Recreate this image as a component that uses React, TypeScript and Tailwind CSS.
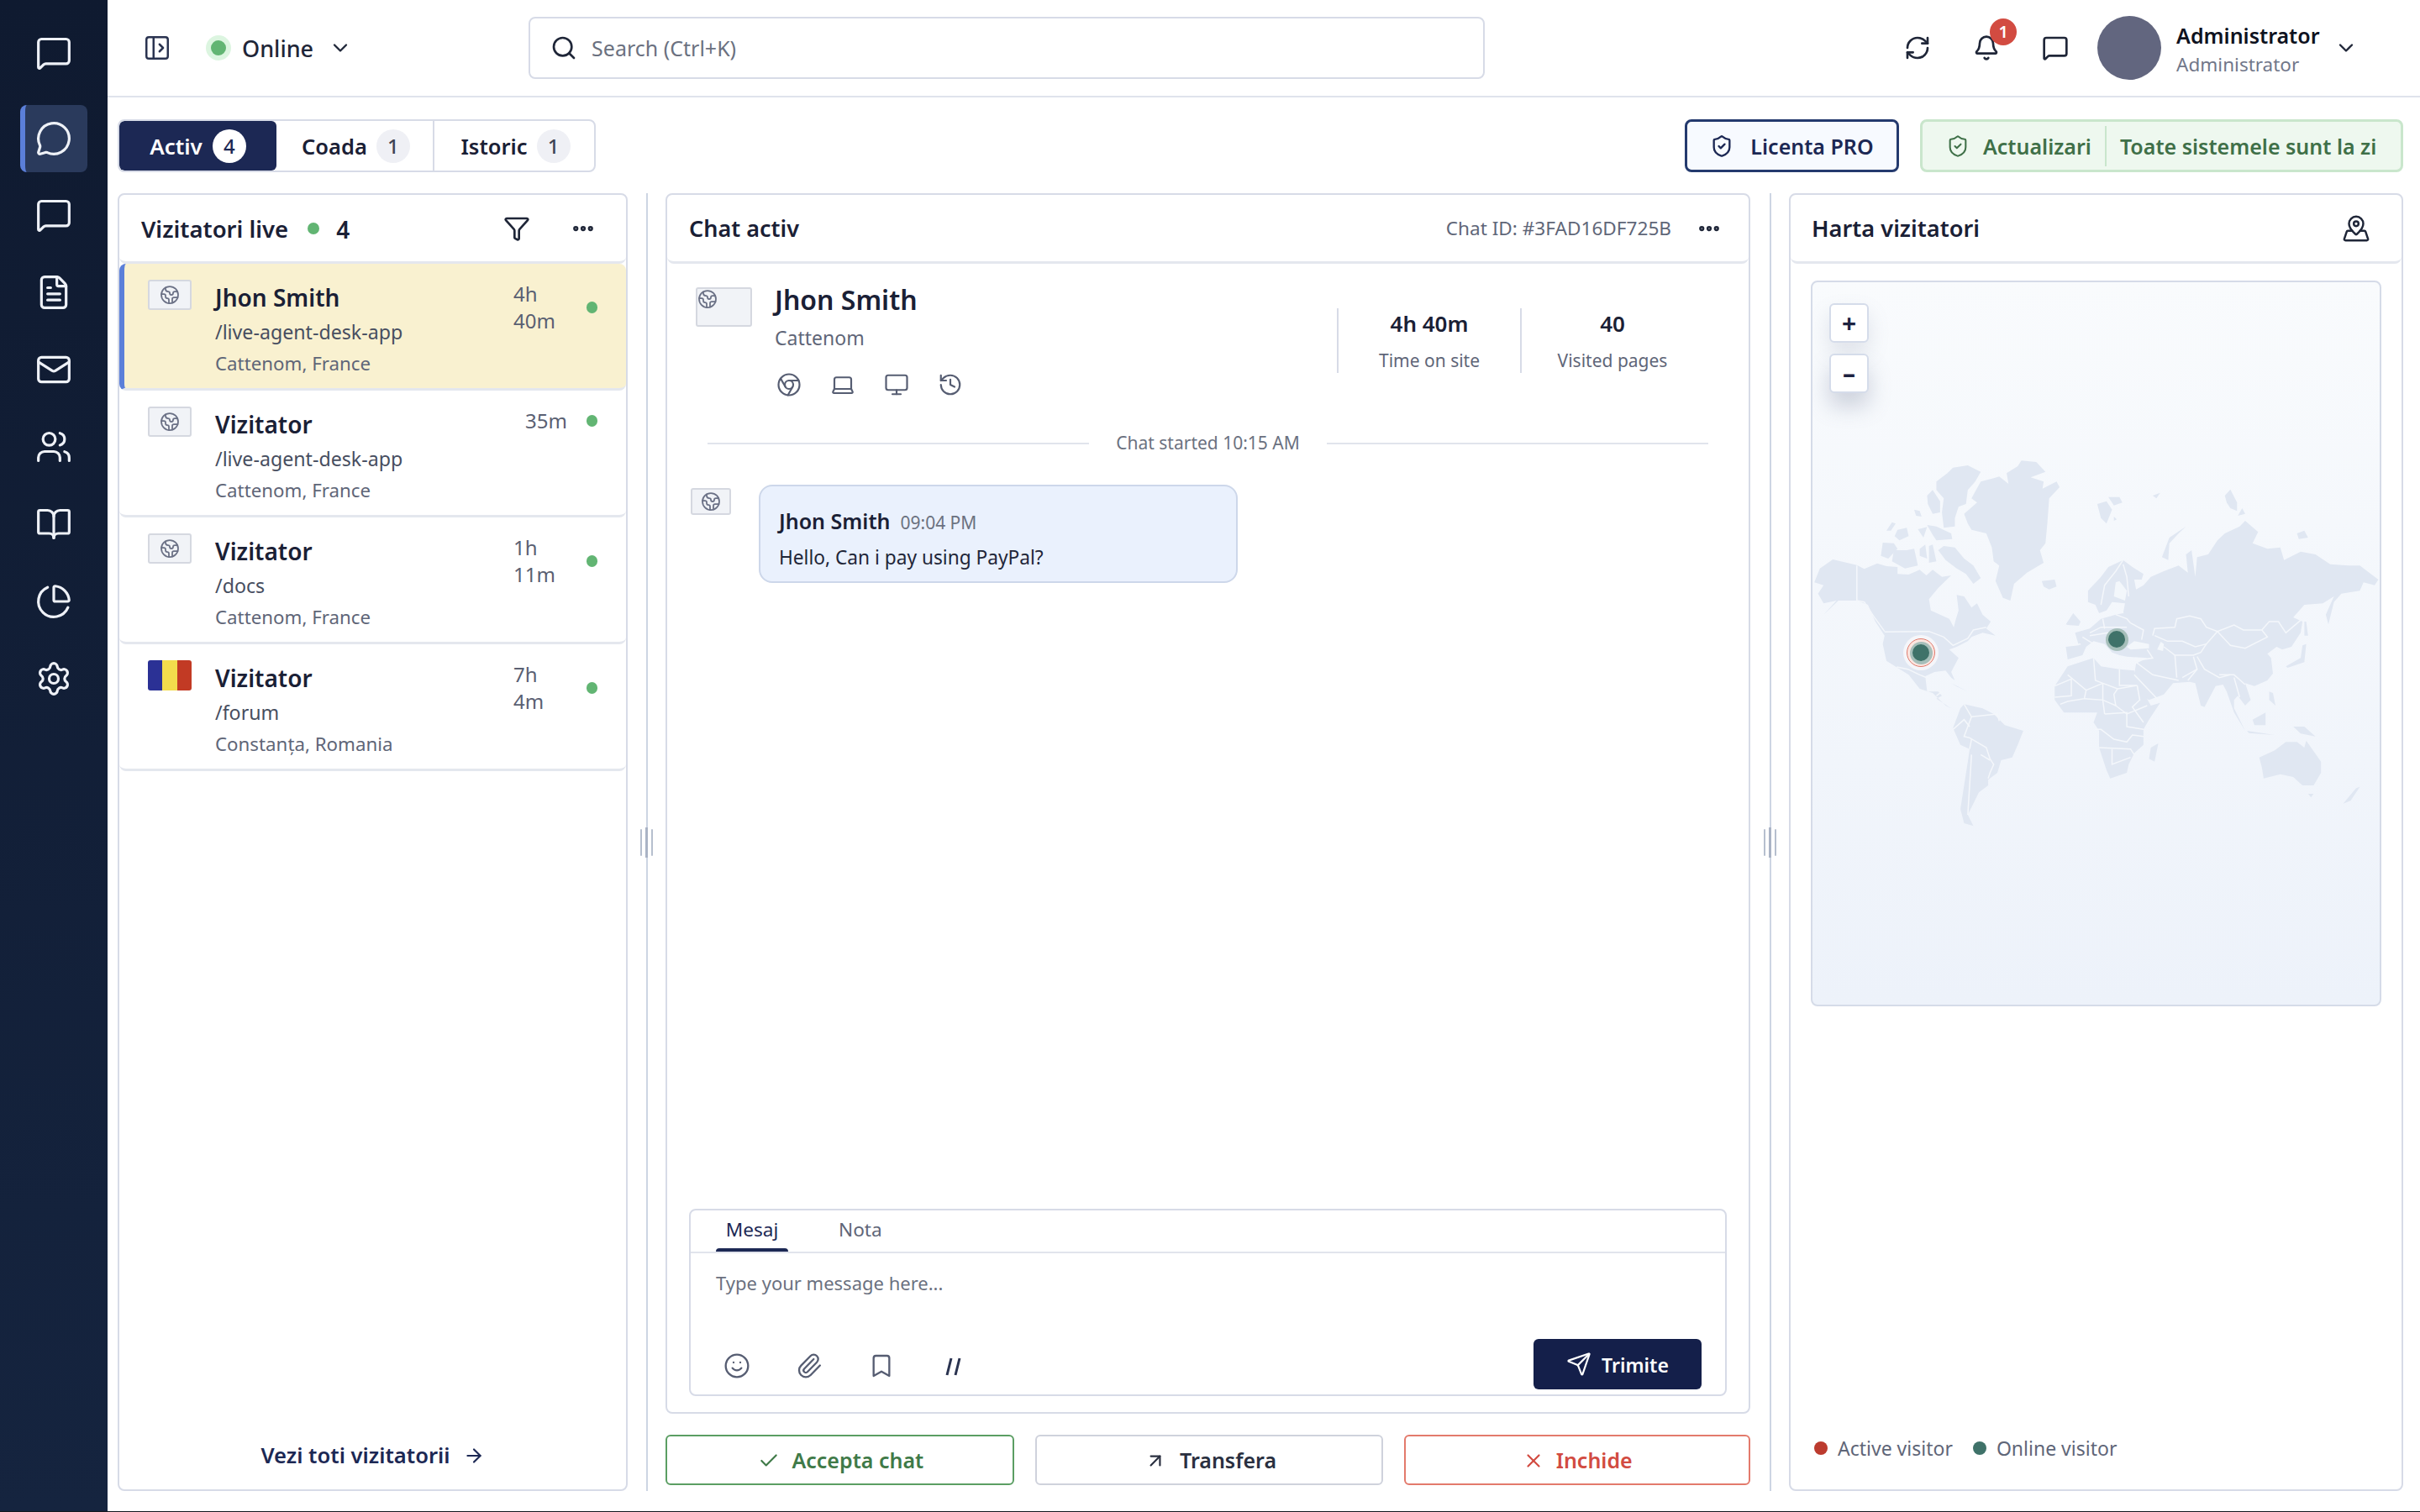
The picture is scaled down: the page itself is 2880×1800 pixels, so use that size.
import type { ReactNode } from "react";
import {
  ArrowRight,
  ArrowUpRight,
  Bell,
  Bookmark,
  BookOpen,
  Check,
  ChartPie,
  ChevronDown,
  Chrome,
  Earth,
  Ellipsis,
  FileText,
  Funnel,
  History,
  Laptop,
  Mail,
  MapPinned,
  MessageCircle,
  MessageSquare,
  Monitor,
  PanelLeftOpen,
  Paperclip,
  RefreshCw,
  Search,
  Send,
  Settings,
  ShieldCheck,
  Smile,
  Users,
  X,
} from "lucide-react";

// traced land shapes, in the coordinates of the map svg viewBox
const land = [
  "15,460 30,410 65,378 130,398 150,412 185,392 210,402 240,405 240,430 270,432 300,415 318,435 335,415 360,440 385,435 350,480 325,520 330,560 380,590 392,620 398,590 405,560 400,505 420,510 440,550 455,535 470,575 492,600 480,625 505,650 470,640 440,655 430,670 400,690 380,700 405,730 385,780 395,810 385,800 370,775 340,780 315,795 320,850 350,850 360,865 345,875 385,910 370,900 335,855 300,840 270,790 240,765 210,740 200,680 205,650 180,600 160,540 130,525 80,525 40,575 75,525 40,535 25,500 40,470",
  "345,100 375,70 390,50 430,42 465,65 450,100 430,130 425,180 405,190 395,230 395,260 365,265 360,210 365,160 345,130",
  "320,150 335,130 355,170 355,210 335,215 322,180",
  "210,275 225,245 235,250 222,275",
  "232,295 240,272 265,265 270,295 245,310",
  "285,200 300,205 305,225 290,222",
  "295,270 320,262 310,300",
  "320,255 345,260 385,285 388,305 345,310 335,290",
  "200,318 230,320 240,340 215,375 195,365",
  "230,345 265,345 285,340 295,400 260,410 225,385",
  "300,340 315,325 320,375 300,365",
  "325,330 335,325 345,385 325,390",
  "350,345 365,330 395,335 420,375 445,400 465,445 445,465 425,430 400,410 370,380",
  "430,250 420,215 455,175 440,160 465,100 500,88 515,82 540,108 535,70 565,45 575,25 615,30 640,65 600,85 635,100 632,125 670,100 678,120 650,160 645,250 640,320 625,345 635,390 590,425 555,465 545,525 525,515 505,455 515,400 500,385 495,335 480,285 440,272",
  "630,455 665,450 670,475 650,485 635,475",
  "780,180 805,170 820,200 805,250 790,230",
  "810,155 840,155 848,175 825,185",
  "825,225 833,235 825,240",
  "930,150 950,140 940,160",
  "1125,150 1140,128 1158,175 1158,205 1140,195 1130,175",
  "1160,222 1172,195 1180,215",
  "955,370 975,300 1020,260 1000,285 975,320 972,380",
  "1320,285 1340,275 1350,300 1325,305",
  "850,380 875,405 905,430 900,450 880,450 885,485 905,470 925,440 960,420 1000,400 1025,425 1020,360 1035,345 1045,440 1050,370 1080,360 1105,310 1125,285 1165,260 1180,240 1215,280 1200,320 1240,340 1275,335 1285,380 1330,350 1370,360 1410,395 1460,400 1490,400 1540,450 1530,470 1500,460 1490,490 1440,500 1420,530 1405,610 1398,575 1420,510 1390,535 1340,540 1310,585 1335,600 1330,640 1305,690 1280,700 1265,690 1240,715 1250,730 1255,785 1240,810 1205,830 1180,820 1195,880 1180,900 1160,865 1150,880 1150,910 1180,990 1150,925 1130,850 1120,825 1100,830 1070,905 1060,900 1045,820 1030,815 985,820 960,860 920,880 905,870 880,790 885,750 915,730 860,725 840,720 820,710 800,680 770,670 750,690 740,720 700,735 695,690 730,685 720,640 760,625 790,590 830,575 850,570 855,535 820,530 805,560 785,570 775,540 755,530 755,490 790,440 810,405",
  "695,610 715,570 735,600 730,615 700,612",
  "1290,760 1330,730 1335,685 1345,680 1340,745 1295,765",
  "1340,600 1345,600 1350,650 1340,650",
  "665,830 700,760 770,730 790,760 840,770 880,775 895,830 925,900 950,890 920,950 905,985 905,1040 880,1070 865,1110 860,1140 815,1160 805,1130 785,1050 785,990 770,960 780,925 720,925 690,925 665,880",
  "920,1090 925,1050 945,1035 935,1100",
  "390,980 410,910 420,895 470,910 500,930 530,970 580,990 565,1040 550,1085 520,1095 510,1140 485,1165 485,1185 460,1210 430,1290 445,1330 420,1320 410,1270 430,1100 435,1055 410,1040",
  "385,820 430,850 400,832",
  "1218,1085 1260,1060 1290,1030 1320,1030 1340,1050 1345,1025 1385,1100 1385,1140 1365,1185 1335,1185 1310,1155 1275,1145 1230,1160 1225,1120",
  "1350,1215 1365,1215 1358,1228",
  "1445,1250 1480,1195 1490,1190 1465,1240",
  "1310,975 1340,975 1370,1010 1330,1000",
  "1200,950 1235,925 1235,970 1205,970",
  "1185,990 1260,1005 1190,998",
  "1245,850 1255,855 1262,900 1245,880",
];

const water = [
  "825,510 830,460 840,455 860,490 855,525",
  "860,690 880,670 920,680 920,695 870,700",
  "942,700 952,672 960,680 958,705",
];

const borders = [
  "M130 400 L130 525 L150 530 L175 580 L205 635",
  "M205 637 L325 635 L365 655 L390 685 L430 660 L445 630 L480 620",
  "M238 762 L268 770 L300 790 L318 800",
  "M345 865 L360 850",
  "M870 605 L905 630 L900 665",
  "M930 650 L935 625 L990 620 L995 590 L1030 580 L1060 590 L1075 620 L1105 635 L1150 612 L1175 630 L1225 630 L1245 600 L1270 600 L1290 640 L1330 595",
  "M1105 635 L1140 685 L1180 695 L1240 655 L1225 630",
  "M935 650 L970 670 L1010 670 L1045 690 L1075 680 L1105 635",
  "M960 690 L990 720 L1040 720 L1060 710 L1075 680",
  "M990 720 L995 800",
  "M1010 800 L1050 770 L1040 725",
  "M1050 770 L1025 810",
  "M1050 725 L1070 770 L1110 800 L1140 790",
  "M1110 790 L1150 790 L1180 825",
  "M1150 800 L1165 870",
  "M760 640 L790 620 L860 620",
  "M795 590 L800 625",
  "M830 575 L860 590 L870 605",
  "M740 655 L770 680",
  "M760 650 L810 640",
  "M850 570 L840 535",
  "M850 380 L830 420 L800 470 L790 540",
  "M850 395 L860 440 L865 510",
  "M735 680 L700 685",
  "M915 700 L930 730 L880 740",
  "M885 745 L930 790 L1000 810",
  "M880 790 L945 880",
  "M770 730 L775 810 L795 820 L835 840 L888 828 L840 828 L840 770",
  "M700 790 L750 845 L795 820",
  "M665 830 L710 805 L710 865 L665 870",
  "M750 845 L745 875 L700 885 L680 895",
  "M795 820 L795 880 L830 900 L825 860 L835 840",
  "M745 875 L795 880 L800 930",
  "M830 900 L860 930 L915 900",
  "M888 828 L895 880 L875 905 L905 960",
  "M800 930 L860 925 L860 975 L905 985",
  "M775 985 L790 985 L825 1020 L860 1030 L875 1005 L905 1010",
  "M785 1050 L870 1055 L880 1075",
  "M820 1055 L820 1110 L870 1085",
  "M420 895 L440 940 L420 1010 L435 1015 L480 1050 L490 1090 L500 1110 L490 1140 L485 1160",
  "M440 940 L510 930 L515 955",
  "M390 985 L420 950 L435 975",
  "M435 1055 L440 1020",
  "M440 1075 L430 1290",
  "M465 1075 L490 1095",
];

const visitors = [
  { name: "Jhon Smith", path: "/live-agent-desk-app", place: "Cattenom, France", time: ["4h", "40m"], active: true },
  { name: "Vizitator", path: "/live-agent-desk-app", place: "Cattenom, France", time: ["35m"] },
  { name: "Vizitator", path: "/docs", place: "Cattenom, France", time: ["1h", "11m"] },
  { name: "Vizitator", path: "/forum", place: "Constanța, Romania", time: ["7h", "4m"], flag: true },
];

const SideItem = ({ children, active }: { children: ReactNode; active?: boolean }) => {
  if (active) {
    return (
      <div className="mt-4 mb-[5px] flex h-20 w-20 items-center justify-center rounded-lg border-l-[6px] border-[#5b7fd9] bg-[#2a3a5c] pr-[6px]">
        {children}
      </div>
    );
  }
  return <div className="flex h-[92px] w-20 items-center justify-center">{children}</div>;
};

const Sidebar = () => {
  const icon = { size: 44, strokeWidth: 1.75, color: "#eef1f7" };
  return (
    <aside className="flex w-[128px] shrink-0 flex-col items-center bg-gradient-to-b from-[#0f1a30] to-[#15243f] pt-[17px]">
      <SideItem>
        <MessageSquare {...icon} />
      </SideItem>
      <SideItem active>
        <MessageCircle {...icon} />
      </SideItem>
      <SideItem>
        <MessageSquare {...icon} />
      </SideItem>
      <SideItem>
        <FileText {...icon} />
      </SideItem>
      <SideItem>
        <Mail {...icon} />
      </SideItem>
      <SideItem>
        <Users {...icon} />
      </SideItem>
      <SideItem>
        <BookOpen {...icon} />
      </SideItem>
      <SideItem>
        <ChartPie {...icon} />
      </SideItem>
      <SideItem>
        <Settings {...icon} />
      </SideItem>
    </aside>
  );
};

const Header = () => {
  return (
    <header className="flex h-[116px] shrink-0 items-center border-b-2 border-[#dfe3ec] pl-[42px] pr-[60px]">
      <PanelLeftOpen size={34} strokeWidth={1.75} color="#2a3350" />
      <span className="ml-[41px] flex h-[30px] w-[30px] items-center justify-center rounded-full bg-[#dcf5e0]">
        <span className="h-[18px] w-[18px] rounded-full bg-[#62b573]" />
      </span>
      <span className="ml-[13px] pt-[2px] text-[27px] font-medium text-[#1f2638]">Online</span>
      <ChevronDown size={28} strokeWidth={2} color="#1f2638" className="ml-[18px]" />
      <div className="ml-[210px] flex h-[74px] w-[1138px] items-center rounded-lg border-2 border-[#d7dbe7] pl-6">
        <Search size={32} strokeWidth={2} color="#1f2638" />
        <span className="ml-[17px] pt-[2px] text-[25px] text-[#6b7180]">Search (Ctrl+K)</span>
      </div>
      <RefreshCw size={32} strokeWidth={2} color="#1f2638" className="ml-[499px]" />
      <span className="relative ml-[50px]">
        <Bell size={32} strokeWidth={2} color="#1f2638" />
        <span className="absolute -right-[20px] -top-[19px] flex h-8 w-8 items-center justify-center rounded-full bg-[#d24b41] text-[20px] font-semibold text-white">
          1
        </span>
      </span>
      <MessageSquare size={32} strokeWidth={2} color="#1f2638" className="ml-[50px]" />
      <span className="ml-[34px] h-[76px] w-[76px] rounded-full bg-[#62667f]" />
      <div className="ml-[18px] flex w-[178px] flex-col pt-[3px]">
        <span className="text-[25px] font-semibold leading-[36px] text-[#0e1220]">Administrator</span>
        <span className="text-[22.5px] leading-[34px] text-[#71778a]">Administrator</span>
      </div>
      <ChevronDown size={28} strokeWidth={2} color="#1f2638" className="ml-[10px]" />
    </header>
  );
};

const TabBadge = ({ children, active }: { children: ReactNode; active?: boolean }) => (
  <span
    className={`flex h-10 w-10 items-center justify-center rounded-full text-[24px] font-medium ${
      active ? "bg-white text-[#1c2854]" : "bg-[#eff0f5] text-[#3d4354]"
    }`}
  >
    {children}
  </span>
);

const TopBar = () => {
  return (
    <div className="flex h-[63px] shrink-0 items-center justify-between">
      <div className="flex h-full items-stretch overflow-hidden rounded-lg border-2 border-[#d7dbe7] text-[26px] font-semibold text-[#1a2035]">
        <div className="flex w-[187px] items-center justify-center gap-[12px] rounded-md bg-[#1c2854] text-white">
          <span className="pt-[2px]">Activ</span> <TabBadge active>4</TabBadge>
        </div>
        <div className="flex w-[188px] items-center justify-center gap-[11px] border-r-2 border-[#d7dbe7] pl-[3px]">
          <span className="pt-[2px] text-[25.5px]">Coada</span> <TabBadge>1</TabBadge>
        </div>
        <div className="flex w-[190px] items-center justify-center gap-[11px] pl-[3px]">
          <span className="pt-[2px] text-[25.5px]">Istoric</span> <TabBadge>1</TabBadge>
        </div>
      </div>
      <div className="flex h-full gap-[25px] text-[25px] font-semibold">
        <div className="flex w-[255px] items-center justify-center gap-[20px] rounded-lg border-[3px] border-[#243a6e] bg-[#f7faff] text-[#1c2854]">
          <ShieldCheck size={28} strokeWidth={2} />
          <span className="pt-[2px]">Licenta PRO</span>
        </div>
        <div className="flex w-[575px] items-center rounded-lg border-[3px] border-[#c9e6cc] bg-[#eef8ef] pl-[28px] text-[#3f7048]">
          <ShieldCheck size={28} strokeWidth={1.75} />
          <span className="ml-[16px] pt-[2px]">Actualizari</span>
          <span className="mx-[16px] h-[48px] w-[2px] bg-[#c9e6cc]" />
          <span className="pt-[2px]">Toate sistemele sunt la zi</span>
        </div>
      </div>
    </div>
  );
};

const VisitorFlag = ({ flag }: { flag?: boolean }) => {
  if (flag) {
    return (
      <span className="flex h-[36px] w-[52px] shrink-0 overflow-hidden rounded-[3px]">
        <span className="flex-1 bg-[#2b3195]" />
        <span className="flex-1 bg-[#f3dc4c]" />
        <span className="flex-1 bg-[#c23a24]" />
      </span>
    );
  }
  return (
    <span className="flex h-[36px] w-[52px] shrink-0 items-center justify-center rounded-[3px] border-2 border-[#d5d8e0] bg-[#f1f3f7]">
      <Earth size={24} strokeWidth={1.75} color="#6a7085" />
    </span>
  );
};

const VisitorRow = ({ visitor }: { visitor: (typeof visitors)[number] }) => {
  return (
    <div
      className={`flex h-[151px] items-start rounded-lg border-b-[3px] border-[#e4e7ee] pt-[19px] pr-[34px] ${
        visitor.active ? "border-l-[6px] border-l-[#5b7fd9] bg-[#f9f1d0] pl-[28px]" : "pl-[34px]"
      }`}
    >
      <VisitorFlag flag={visitor.flag} />
      <div className="ml-[28px] flex-1 pt-[2px]">
        <div className="text-[28px] font-semibold leading-[38px] text-[#1a2035]">{visitor.name}</div>
        <div className="mt-[3px] text-[23.2px] leading-[38px] text-[#474e60]">{visitor.path}</div>
        <div className="text-[22.3px] leading-[38px] text-[#5f6678]">{visitor.place}</div>
      </div>
      <div className="flex items-center pt-[1px]">
        <div className={`text-[24px] leading-[32px] text-[#5a6072] ${visitor.time.length > 1 ? "w-[87px]" : "w-[73px]"}`}>
          {visitor.time.map((t) => (
            <div key={t}>{t}</div>
          ))}
        </div>
        <span className="h-[14px] w-[13px] rounded-full bg-[#62b573]" />
      </div>
    </div>
  );
};

const VisitorsPanel = () => {
  return (
    <section className="flex w-[607px] shrink-0 flex-col rounded-lg border-2 border-[#d7dbe7]">
      <div className="flex h-[82px] shrink-0 items-center rounded-lg border-b-[3px] border-[#e4e7ee] pl-[26px] pr-[36px]">
        <span className="pt-[2px] text-[27.5px] font-semibold text-[#1a2035]">Vizitatori live</span>
        <span className="ml-[23px] h-[14px] w-[14px] rounded-full bg-[#62b573]" />
        <span className="ml-[20px] pt-[2px] text-[28px] font-semibold text-[#1a2035]">4</span>
        <Funnel size={32} strokeWidth={2} color="#1f2638" className="ml-auto" />
        <Ellipsis size={30} strokeWidth={3} color="#1f2638" className="ml-[48px]" />
      </div>
      {visitors.map((v, i) => (
        <VisitorRow key={i} visitor={v} />
      ))}
      <div className="mt-auto flex h-[84px] items-center justify-center gap-[15px] pt-[4px] text-[25.6px] font-semibold text-[#1c2854]">
        Vezi toti vizitatorii
        <ArrowRight size={26} strokeWidth={2} />
      </div>
    </section>
  );
};

const Resizer = () => (
  <div className="relative flex w-[45px] shrink-0 justify-center">
    <span className="h-full w-[2px] bg-[#cdd5e3]" />
    <span className="absolute top-1/2 flex h-[36px] -translate-y-1/2 items-center gap-[4px]">
      <span className="h-[32px] w-[2px] rounded bg-[#b6bfce]" />
      <span className="h-[36px] w-[3px] bg-[#aab3c5]" />
      <span className="h-[32px] w-[2px] rounded bg-[#b6bfce]" />
    </span>
  </div>
);

const ProfileIcon = ({ children }: { children: ReactNode }) => (
  <span className="flex w-[64px] justify-start">{children}</span>
);

const ChatPanel = () => {
  const small = { size: 30, strokeWidth: 1.75, color: "#565d72" };
  return (
    <div className="flex w-[1291px] shrink-0 flex-col">
      <section className="flex h-[1453px] flex-col rounded-lg border-2 border-[#d7dbe7]">
        <div className="flex h-[82px] shrink-0 items-center rounded-lg border-b-[3px] border-[#e4e7ee] pl-[26px] pr-[32px]">
          <span className="pt-[2px] text-[27px] font-semibold text-[#1a2035]">Chat activ</span>
          <span className="ml-auto text-[22.6px] text-[#5f6678]">Chat ID: #3FAD16DF725B</span>
          <Ellipsis size={30} strokeWidth={3} color="#1f2638" className="ml-[30px]" />
        </div>
        <div className="flex shrink-0 pl-[34px] pt-[28px]">
          <span className="h-[47px] w-[67px] shrink-0 rounded-[3px] border-2 border-[#d5d8e0] bg-[#f1f3f7]">
            <Earth size={24} strokeWidth={1.75} color="#6a7085" />
          </span>
          <div className="ml-[27px] w-[669px]">
            <div className="text-[32px] font-semibold leading-[30px] text-[#1a2035]">Jhon Smith</div>
            <div className="mt-[14px] text-[23px] leading-[32px] text-[#5f6678]">Cattenom</div>
            <div className="mt-[25px] flex pl-[2px]">
              <ProfileIcon>
                <Chrome {...small} />
              </ProfileIcon>
              <ProfileIcon>
                <Laptop {...small} />
              </ProfileIcon>
              <ProfileIcon>
                <Monitor {...small} />
              </ProfileIcon>
              <ProfileIcon>
                <History {...small} />
              </ProfileIcon>
            </div>
          </div>
          <div className="mt-[25px] flex h-[77px] w-[218px] flex-col items-center border-l-2 border-[#d7dbe7]">
            <span className="text-[26px] font-semibold leading-[36px] text-[#1a2035]">4h 40m</span>
            <span className="mt-[10px] text-[21px] leading-[32px] text-[#5f6678]">Time on site</span>
          </div>
          <div className="mt-[25px] flex h-[77px] w-[218px] flex-col items-center border-l-2 border-[#d7dbe7]">
            <span className="text-[26px] font-semibold leading-[36px] text-[#1a2035]">40</span>
            <span className="mt-[10px] text-[21px] leading-[32px] text-[#5f6678]">Visited pages</span>
          </div>
        </div>
        <div className="mt-[39px] flex shrink-0 items-center gap-[32px] px-[48px]">
          <span className="h-[2px] flex-1 bg-[#e1e4ec]" />
          <span className="text-[21px] text-[#6b7180]">Chat started 10:15 AM</span>
          <span className="h-[2px] flex-1 bg-[#e1e4ec]" />
        </div>
        <div className="mt-[33px] flex shrink-0 pl-[28px]">
          <span className="mt-[4px] flex h-[32px] w-[48px] items-center justify-center rounded-[3px] border-2 border-[#d5d8e0] bg-[#f1f3f7]">
            <Earth size={24} strokeWidth={1.75} color="#6a7085" />
          </span>
          <div className="ml-[33px] h-[117px] w-[570px] rounded-2xl border-2 border-[#cdd7ea] bg-[#eaf1fd] pl-[22px] pt-[23px]">
            <div className="flex items-baseline gap-[12px] leading-[36px]">
              <span className="text-[25px] font-semibold text-[#1a2035]">Jhon Smith</span>
              <span className="text-[21px] text-[#6b7180]">09:04 PM</span>
            </div>
            <div className="mt-[6px] text-[22.7px] leading-[36px] text-[#1f2638]">Hello, Can i pay using PayPal?</div>
          </div>
        </div>
        <div className="mx-[26px] mb-[19px] mt-auto flex h-[223px] shrink-0 flex-col rounded-lg border-2 border-[#d7dbe7]">
          <div className="flex h-[51px] shrink-0 border-b-2 border-[#e1e4ec] pl-[30px] text-[22.6px]">
            <span className="relative w-[86px] pt-[6px] text-center text-[#1c2854]">
              Mesaj
              <span className="absolute bottom-0 left-0 h-[4px] w-full rounded-t bg-[#1c2854]" />
            </span>
            <span className="ml-[60px] pt-[6px] text-[#5f6678]">Nota</span>
          </div>
          <div className="pl-[30px] pt-[19px] text-[22px] text-[#6b7180]">Type your message here...</div>
          <div className="mt-auto flex items-end pb-[6px] pl-[39px] pr-[28px]">
            <div className="flex items-center gap-[54px] pb-[12px]">
              <Smile size={32} strokeWidth={1.75} color="#565d72" />
              <Paperclip size={32} strokeWidth={1.75} color="#565d72" />
              <Bookmark size={32} strokeWidth={1.75} color="#565d72" />
              <svg width="32" height="32" viewBox="0 0 32 32" fill="none" stroke="#2a3350" strokeWidth="3">
                <path d="M13 7 8 27M23 7 18 27" />
              </svg>
            </div>
            <div className="ml-auto flex h-[60px] w-[200px] items-center justify-center gap-[12px] rounded-md bg-[#141f4a] text-[23px] font-semibold text-white">
              <Send size={30} strokeWidth={1.75} />
              <span className="pt-[2px]">Trimite</span>
            </div>
          </div>
        </div>
      </section>
      <div className="mt-[25px] flex h-[60px] shrink-0 gap-[25px] text-[25px] font-semibold">
        <div className="flex flex-1 items-center justify-center gap-[14px] rounded-md border-2 border-[#5b9e63] pl-[3px] pt-[2px] text-[#3f7a48]">
          <Check size={26} strokeWidth={2} />
          Accepta chat
        </div>
        <div className="flex flex-1 items-center justify-center gap-[16px] rounded-md border-2 border-[#cfd2dc] pl-[3px] pt-[2px] text-[#2a3040]">
          <ArrowUpRight size={26} strokeWidth={2} />
          Transfera
        </div>
        <div className="flex flex-1 items-center justify-center gap-[14px] rounded-md border-2 border-[#e37a6c] pt-[2px] text-[#d24b41]">
          <X size={26} strokeWidth={2} />
          Inchide
        </div>
      </div>
    </div>
  );
};

const Marker = ({ left, top, active }: { left: number; top: number; active?: boolean }) => (
  <span className="absolute flex h-[44px] w-[44px] items-center justify-center rounded-full" style={{ left, top }}>
    {active && <span className="absolute h-[42px] w-[42px] rounded-full bg-[#f5f6fa]" />}
    {active && <span className="absolute h-[34px] w-[34px] rounded-full border border-[#e07a6c] bg-[#fbe6e0]" />}
    <span className="absolute h-[27px] w-[27px] rounded-full bg-[#a6bfba]" />
    <span className="absolute h-[20px] w-[20px] rounded-full bg-[#3f7269]" />
  </span>
);

const WorldMap = () => {
  return (
    <div className="relative mx-[24px] mt-[20px] h-[864px] shrink-0 overflow-hidden rounded-lg border-2 border-[#d5dbe8] bg-gradient-to-b from-[#f9fbfd] to-[#edf2fa]">
      <svg
        className="absolute left-0 top-[204px] h-[460px] w-[680px]"
        viewBox="10 0 1545 1380"
        preserveAspectRatio="none"
      >
        {land.map((points, i) => (
          <polygon key={i} points={points} fill="#e0e7f2" strokeLinejoin="round" />
        ))}
        {water.map((points, i) => (
          <polygon key={i} points={points} fill="#f3f7fb" />
        ))}
        {borders.map((d, i) => (
          <path key={i} d={d} fill="none" stroke="#f4f7fb" strokeWidth="1.5" vectorEffect="non-scaling-stroke" />
        ))}
      </svg>
      <Marker left={107} top={419} active />
      <Marker left={340} top={403} />
      <div className="absolute left-[20px] top-[25px] flex flex-col gap-[13px]">
        <div className="flex h-[47px] w-[47px] items-center justify-center rounded-md border-2 border-[#d5dcea] bg-white text-[30px] font-bold leading-none text-[#1c2240] shadow-[0_12px_24px_rgba(110,120,150,0.18)]">
          +
        </div>
        <div className="flex h-[47px] w-[47px] items-center justify-center rounded-md border-2 border-[#d5dcea] bg-white text-[30px] font-bold leading-none text-[#1c2240] shadow-[0_16px_26px_rgba(110,120,150,0.3)]">
          –
        </div>
      </div>
    </div>
  );
};

const MapPanel = () => {
  return (
    <section className="flex w-[731px] shrink-0 flex-col rounded-lg border-2 border-[#d7dbe7]">
      <div className="flex h-[82px] shrink-0 items-center rounded-lg border-b-[3px] border-[#e4e7ee] pl-[25px] pr-[37px]">
        <span className="pt-[2px] text-[27.2px] font-semibold text-[#1a2035]">Harta vizitatori</span>
        <MapPinned size={34} strokeWidth={1.75} color="#1f2638" className="ml-auto" />
      </div>
      <WorldMap />
      <div className="mt-auto flex items-center pb-[32px] pl-[28px] text-[23px] text-[#5f6678]">
        <span className="h-[16px] w-[16px] rounded-full bg-[#bc3b2e]" />
        <span className="ml-[12px]">Active visitor</span>
        <span className="ml-[24px] h-[16px] w-[16px] rounded-full bg-[#3f7269]" />
        <span className="ml-[12px]">Online visitor</span>
      </div>
    </section>
  );
};

export default function App() {
  return (
    <div className="flex h-[1800px] w-[2880px] overflow-hidden border-b border-[#14181f] bg-white font-['Noto_Sans',sans-serif]">
      <Sidebar />
      <main className="flex min-w-0 flex-1 flex-col">
        <Header />
        <div className="flex flex-1 flex-col pb-[24px] pl-[12px] pr-[20px] pt-[26px]">
          <TopBar />
          <div className="mt-[25px] flex min-h-0 flex-1">
            <VisitorsPanel />
            <Resizer />
            <ChatPanel />
            <div className="w-[1px] shrink-0" />
            <Resizer />
            <MapPanel />
          </div>
        </div>
      </main>
    </div>
  );
}
